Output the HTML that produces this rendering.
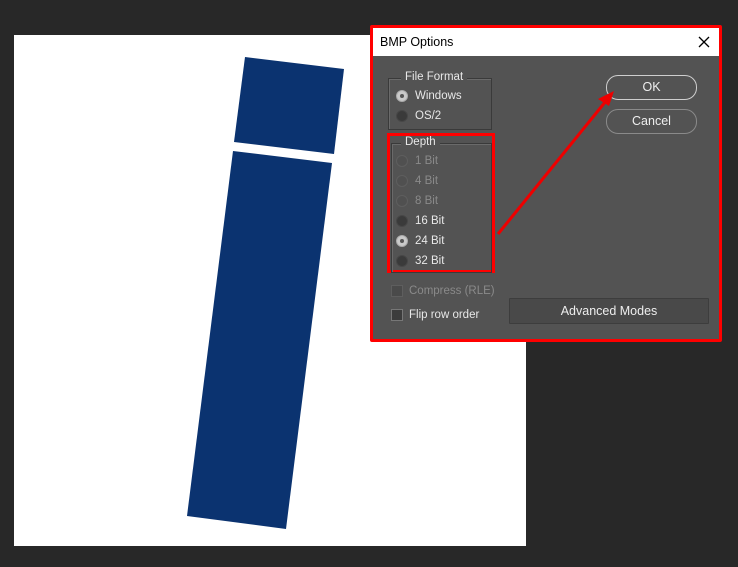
<!DOCTYPE html>
<html><head><meta charset="utf-8"><style>
html,body{margin:0;padding:0}
body{width:738px;height:567px;background:#282828;position:relative;overflow:hidden;font-family:"Liberation Sans",sans-serif}
.a{position:absolute}
#dlg{left:370px;top:25px;width:346px;height:311px;border:3px solid #f00;background:#535353;border-radius:2px}
#title{left:0;top:0;width:346px;height:28px;background:#fff}
.t{position:absolute;font-size:11.5px;color:#e8e8e8;white-space:nowrap}
.dis{color:#8a8a8a}
.grp{position:absolute;border:1px solid #3a3a3a;box-shadow:1px 1px 0 #6a6a6a inset}
.lg{position:absolute;background:#535353;padding:0 4px;font-size:11.5px;color:#e8e8e8}
.r{position:absolute;width:12px;height:12px;border-radius:50%;background:#3a3a3a;border:1px solid #474747;box-sizing:border-box}
.r.on{background:#c9c9c9;border-color:#aaa}
.r.on:after{content:"";position:absolute;left:3px;top:3px;width:4px;height:4px;border-radius:50%;background:#555}
.r.d{background:#505050;border-color:#5e5e5e}
.cb{position:absolute;width:12px;height:12px;background:#3c3c3c;border:1px solid #777;box-sizing:border-box}
.cb.d{border-color:#5e5e5e;background:#4a4a4a}
.btn{position:absolute;border-radius:12px;box-sizing:border-box;text-align:center;font-size:12.5px;color:#eee}
</style></head><body>
<div class="a" style="left:14px;top:35px;width:512px;height:511px;background:#fff"></div>
<svg class="a" style="left:0;top:0" width="738" height="567">
<polygon points="245,57 344,69 334,154 234,142" fill="#0b3370"/>
<polygon points="233,151 332,163 286,529 187,516" fill="#0b3370"/>
</svg>
<div id="dlg" class="a">
<div id="title" class="a"><span class="a" style="left:7px;top:7px;font-size:12.5px;color:#000">BMP Options</span>
<svg class="a" style="left:325px;top:8px" width="12" height="12"><path d="M1 1L11 11M11 1L1 11" stroke="#000" stroke-width="1.3"/></svg></div>
<div class="grp" style="left:15px;top:50px;width:102px;height:50px"></div>
<div class="lg" style="left:28px;top:43px">File Format</div>
<div class="r on" style="left:23px;top:62px"></div><div class="t" style="left:42px;top:62px">Windows</div>
<div class="r" style="left:23px;top:82px"></div><div class="t" style="left:42px;top:82px">OS/2</div>
<div class="a" style="left:14px;top:105px;width:102px;height:134px;border:3px solid #f00"></div>
<div class="grp" style="left:18px;top:115px;width:99px;height:128px;border-top:1px solid #3a3a3a"></div>
<div class="lg" style="left:28px;top:108px">Depth</div>
<div class="r d" style="left:23px;top:127px"></div><div class="t dis" style="left:42px;top:127px">1 Bit</div>
<div class="r d" style="left:23px;top:147px"></div><div class="t dis" style="left:42px;top:147px">4 Bit</div>
<div class="r d" style="left:23px;top:167px"></div><div class="t dis" style="left:42px;top:167px">8 Bit</div>
<div class="r" style="left:23px;top:187px"></div><div class="t" style="left:42px;top:187px">16 Bit</div>
<div class="r on" style="left:23px;top:207px"></div><div class="t" style="left:42px;top:207px">24 Bit</div>
<div class="r" style="left:23px;top:227px"></div><div class="t" style="left:42px;top:227px">32 Bit</div>
<div class="cb d" style="left:18px;top:257px"></div><div class="t dis" style="left:36px;top:257px">Compress (RLE)</div>
<div class="cb" style="left:18px;top:281px"></div><div class="t" style="left:36px;top:281px">Flip row order</div>
<div class="btn" style="left:233px;top:47px;width:91px;height:25px;border:1.5px solid #cfcfcf;line-height:22px">OK</div>
<div class="btn" style="left:233px;top:81px;width:91px;height:25px;border:1px solid #8a8a8a;line-height:23px">Cancel</div>
<div class="btn" style="left:136px;top:270px;width:200px;height:26px;border:1px solid #3d3d3d;border-radius:1px;background:#494949;line-height:24px">Advanced Modes</div>
</div>
<svg class="a" style="left:0;top:0" width="738" height="567">
<line x1="498" y1="234" x2="606" y2="101" stroke="#e00" stroke-width="3"/>
<polygon points="614,91 598,99 609,106" fill="#e00"/>
</svg>
</body></html>
